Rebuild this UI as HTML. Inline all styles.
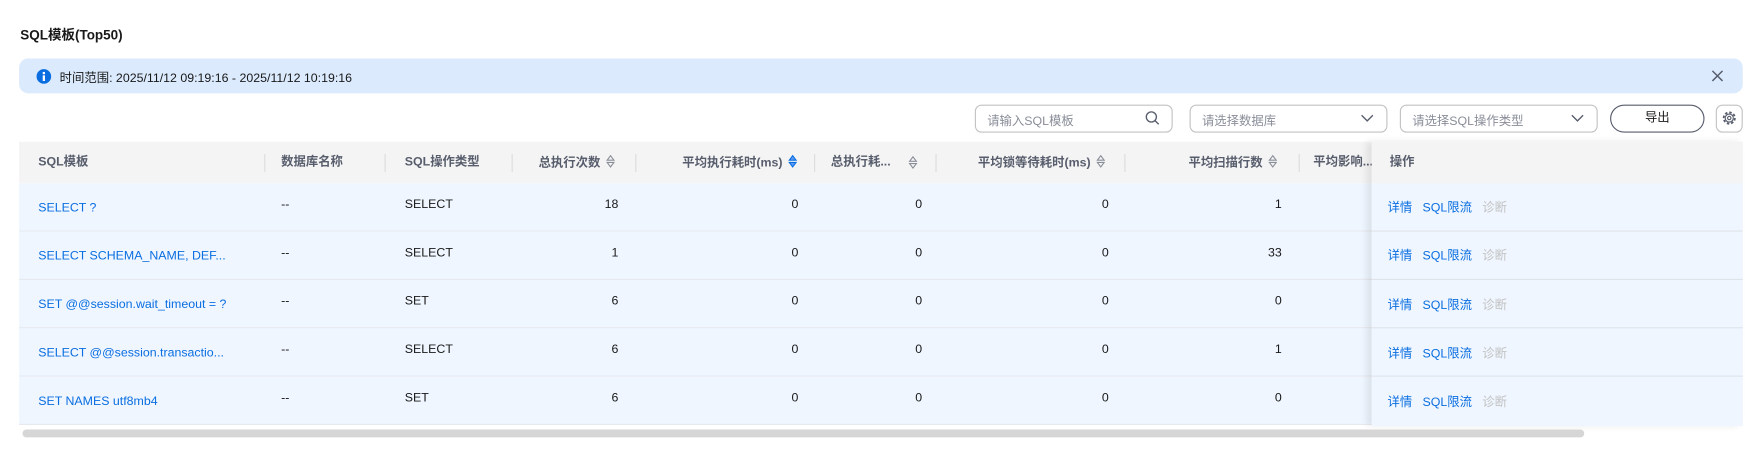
<!DOCTYPE html>
<html><head><meta charset="utf-8"><style>
*{box-sizing:border-box;margin:0;padding:0}
body{width:1763px;height:449px;background:#fff;font-family:"Liberation Sans","Noto Sans CJK SC",sans-serif;font-size:11px;color:#191919;overflow:hidden}
#w{position:relative;width:1568px;height:400px;transform:scale(1.12436);transform-origin:0 0}
.a{position:absolute;white-space:nowrap}
.title{left:18px;top:22px;font-size:12px;font-weight:bold;color:#191919}
.alert{left:17px;top:52px;width:1533px;height:31px;background:#dbeafd;border-radius:8px}
.inp{top:93px;height:25px;border:1px solid #c2c2c2;border-radius:6px;color:#8a8e99;padding:5px 10px;font-size:11px}
.hdr{left:17px;top:126px;width:1533px;height:37px;background:#f4f4f4}
.row{left:17px;width:1533px;height:43px;background:#eff6ff;border-bottom:1px solid #e6e9ee}
.h{top:137px;color:#575d6c;font-weight:bold;font-size:11px;line-height:14px}
.h svg{vertical-align:-2px;margin-left:5px}
.sep{top:137px;width:1px;height:16px;background:#dcdcdc}
.lnk{color:#0a6ee0}
.dis{color:#c2c2c2}
.r{text-align:right}
</style></head><body><div id="w">
<div class="a title">SQL模板(Top50)</div>
<div class="a alert"></div>
<svg class="a" style="left:32px;top:61px" width="14" height="14"><circle cx="7" cy="7" r="6.5" fill="#0a6ee0"/><rect x="6" y="6" width="2" height="5" fill="#fff"/><rect x="6" y="3" width="2" height="2" fill="#fff"/></svg>
<div class="a" style="left:53px;top:61px;color:#191919">时间范围: 2025/11/12 09:19:16 - 2025/11/12 10:19:16</div>
<svg class="a" style="left:1522px;top:62px" width="11" height="11"><path d="M1 1L10 10M10 1L1 10" stroke="#575d6c" stroke-width="1.3"/></svg>

<div class="a inp" style="left:867px;width:176px">请输入SQL模板</div>
<svg class="a" style="left:1018px;top:98px" width="14" height="14"><circle cx="6" cy="6" r="4.5" fill="none" stroke="#575d6c" stroke-width="1.2"/><path d="M9.3 9.3L12.5 12.5" stroke="#575d6c" stroke-width="1.2"/></svg>
<div class="a inp" style="left:1058px;width:176px">请选择数据库</div>
<svg class="a" style="left:1210px;top:101px" width="12" height="8"><path d="M1 1.5L6 6.5L11 1.5" fill="none" stroke="#575d6c" stroke-width="1.2"/></svg>
<div class="a inp" style="left:1245px;width:176px">请选择SQL操作类型</div>
<svg class="a" style="left:1397px;top:101px" width="12" height="8"><path d="M1 1.5L6 6.5L11 1.5" fill="none" stroke="#575d6c" stroke-width="1.2"/></svg>
<div class="a" style="left:1432px;top:93px;width:84px;height:25px;border:1px solid #575d6c;border-radius:13px;text-align:center;line-height:23px;color:#191919">导出</div>
<div class="a" style="left:1526px;top:93px;width:24px;height:25px;border:1px solid #c2c2c2;border-radius:6px"></div>
<svg class="a" style="left:1531px;top:98px" width="14" height="14"><circle cx="7" cy="7" r="5" fill="none" stroke="#575d6c" stroke-width="1.6" stroke-dasharray="2.2 1.7"/><circle cx="7" cy="7" r="3.6" fill="none" stroke="#575d6c" stroke-width="1"/><circle cx="7" cy="7" r="1.5" fill="none" stroke="#575d6c" stroke-width="1"/></svg>

<div class="a hdr"></div>
<div class="a h" style="left:34px">SQL模板</div>
<div class="a sep" style="left:235px"></div>
<div class="a h" style="left:250px">数据库名称</div>
<div class="a sep" style="left:342px"></div>
<div class="a h" style="left:360px">SQL操作类型</div>
<div class="a sep" style="left:455px"></div>
<div class="a h r" style="left:456px;width:91px">总执行次数<svg width="8" height="13"><path d="M1 5.5L4 1.5L7 5.5ZM1 7.5L4 11.5L7 7.5Z" fill="none" stroke="#8a8e99"/></svg></div>
<div class="a sep" style="left:565px"></div>
<div class="a h r" style="left:566px;width:143px">平均执行耗时(ms)<svg width="8" height="13"><path d="M1 5.5L4 1.5L7 5.5ZM1 7.5L4 11.5L7 7.5Z" fill="#5e9cf5" stroke="#0a6ee0"/></svg></div>
<div class="a sep" style="left:724px"></div>
<div class="a h" style="left:739px">总执行耗...</div>
<svg class="a" style="left:808px;top:138px" width="8" height="13"><path d="M1 5.5L4 1.5L7 5.5ZM1 7.5L4 11.5L7 7.5Z" fill="none" stroke="#8a8e99"/></svg>
<div class="a sep" style="left:832px"></div>
<div class="a h r" style="left:833px;width:150px">平均锁等待耗时(ms)<svg width="8" height="13"><path d="M1 5.5L4 1.5L7 5.5ZM1 7.5L4 11.5L7 7.5Z" fill="none" stroke="#8a8e99"/></svg></div>
<div class="a sep" style="left:1000px"></div>
<div class="a h r" style="left:1001px;width:135px">平均扫描行数<svg width="8" height="13"><path d="M1 5.5L4 1.5L7 5.5ZM1 7.5L4 11.5L7 7.5Z" fill="none" stroke="#8a8e99"/></svg></div>
<div class="a sep" style="left:1155px"></div>
<div class="a h" style="left:1168px">平均影响...</div>

<div class="a row" style="top:163px"></div>
<div class="a row" style="top:206px"></div>
<div class="a row" style="top:249px"></div>
<div class="a row" style="top:292px"></div>
<div class="a row" style="top:335px"></div>

<div class="a" style="left:1220px;top:126px;width:330px;height:253px;box-shadow:-4px 0 6px rgba(0,0,0,0.09)"></div>
<div class="a" style="left:1220px;top:126px;width:330px;height:37px;background:#f4f4f4"></div>
<div class="a h" style="left:1236px">操作</div>
<div class="a" style="left:1220px;top:163px;width:330px;height:216px;background:#eff6ff"></div>
<div class="a" style="left:1220px;top:205px;width:330px;height:1px;background:#e0e4ea"></div>
<div class="a" style="left:1220px;top:248px;width:330px;height:1px;background:#e0e4ea"></div>
<div class="a" style="left:1220px;top:291px;width:330px;height:1px;background:#e0e4ea"></div>
<div class="a" style="left:1220px;top:334px;width:330px;height:1px;background:#e0e4ea"></div>

<div class="a lnk" style="left:34px;top:179px">SELECT ?</div>
<div class="a lnk" style="left:34px;top:222px">SELECT SCHEMA_NAME, DEF...</div>
<div class="a lnk" style="left:34px;top:265px">SET @@session.wait_timeout = ?</div>
<div class="a lnk" style="left:34px;top:308px">SELECT @@session.transactio...</div>
<div class="a lnk" style="left:34px;top:351px">SET NAMES utf8mb4</div>

<div class="a" style="left:250px;top:176px">--</div>
<div class="a" style="left:250px;top:219px">--</div>
<div class="a" style="left:250px;top:262px">--</div>
<div class="a" style="left:250px;top:305px">--</div>
<div class="a" style="left:250px;top:348px">--</div>

<div class="a" style="left:360px;top:176px">SELECT</div>
<div class="a" style="left:360px;top:219px">SELECT</div>
<div class="a" style="left:360px;top:262px">SET</div>
<div class="a" style="left:360px;top:305px">SELECT</div>
<div class="a" style="left:360px;top:348px">SET</div>

<div class="a r" style="left:450px;width:100px;top:176px">18</div>
<div class="a r" style="left:450px;width:100px;top:219px">1</div>
<div class="a r" style="left:450px;width:100px;top:262px">6</div>
<div class="a r" style="left:450px;width:100px;top:305px">6</div>
<div class="a r" style="left:450px;width:100px;top:348px">6</div>

<div class="a" style="left:704px;top:176px">0</div><div class="a" style="left:704px;top:219px">0</div><div class="a" style="left:704px;top:262px">0</div><div class="a" style="left:704px;top:305px">0</div><div class="a" style="left:704px;top:348px">0</div>
<div class="a" style="left:814px;top:176px">0</div><div class="a" style="left:814px;top:219px">0</div><div class="a" style="left:814px;top:262px">0</div><div class="a" style="left:814px;top:305px">0</div><div class="a" style="left:814px;top:348px">0</div>
<div class="a" style="left:980px;top:176px">0</div><div class="a" style="left:980px;top:219px">0</div><div class="a" style="left:980px;top:262px">0</div><div class="a" style="left:980px;top:305px">0</div><div class="a" style="left:980px;top:348px">0</div>

<div class="a r" style="left:1040px;width:100px;top:176px">1</div>
<div class="a r" style="left:1040px;width:100px;top:219px">33</div>
<div class="a r" style="left:1040px;width:100px;top:262px">0</div>
<div class="a r" style="left:1040px;width:100px;top:305px">1</div>
<div class="a r" style="left:1040px;width:100px;top:348px">0</div>

<div class="a" style="left:1234px;top:176px"><span class="lnk">详情</span>&nbsp;&nbsp;&nbsp;<span class="lnk">SQL限流</span>&nbsp;&nbsp;&nbsp;<span class="dis">诊断</span></div>
<div class="a" style="left:1234px;top:219px"><span class="lnk">详情</span>&nbsp;&nbsp;&nbsp;<span class="lnk">SQL限流</span>&nbsp;&nbsp;&nbsp;<span class="dis">诊断</span></div>
<div class="a" style="left:1234px;top:263px"><span class="lnk">详情</span>&nbsp;&nbsp;&nbsp;<span class="lnk">SQL限流</span>&nbsp;&nbsp;&nbsp;<span class="dis">诊断</span></div>
<div class="a" style="left:1234px;top:306px"><span class="lnk">详情</span>&nbsp;&nbsp;&nbsp;<span class="lnk">SQL限流</span>&nbsp;&nbsp;&nbsp;<span class="dis">诊断</span></div>
<div class="a" style="left:1234px;top:349px"><span class="lnk">详情</span>&nbsp;&nbsp;&nbsp;<span class="lnk">SQL限流</span>&nbsp;&nbsp;&nbsp;<span class="dis">诊断</span></div>

<div class="a" style="left:20px;top:382px;width:1389px;height:7px;background:#d6d6d6;border-radius:4px"></div>
</div></body></html>
